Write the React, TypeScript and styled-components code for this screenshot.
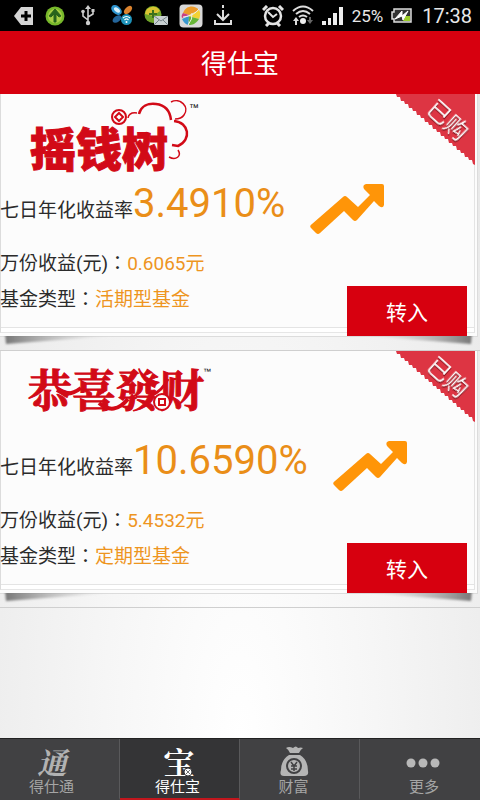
import React from "react";
import styled, { createGlobalStyle } from "styled-components";

const GlobalStyle = createGlobalStyle`
  * { box-sizing: border-box; }
  body {
    margin: 0;
    background: #ececec;
    font-family: Roboto, "Noto Sans CJK SC", sans-serif;
    color: #2b2b2b;
  }
`;

const Screen = styled.div`
  display: flex;
  flex-direction: column;
  min-height: 100vh;
`;

const StatusBar = styled.div`
  display: flex;
  align-items: center;
  justify-content: space-between;
  height: 31px;
  padding: 0 8px 0 14px;
  background: #000;
  color: #e8e8e8;
`;

const StatusGroup = styled.div<{ $gap: number }>`
  display: flex;
  align-items: center;
  gap: ${(p) => p.$gap}px;
`;

const Percent = styled.span`
  font-size: 17px;
  line-height: 20px;
`;

const Clock = styled.time`
  padding-left: 2px;
  font-size: 20px;
  line-height: 24px;
`;

const Header = styled.header`
  display: flex;
  align-items: center;
  justify-content: center;
  height: 63px;
  background: #d7000f;
`;

const Title = styled.h1`
  margin: 0;
  padding-top: 2px;
  color: #fff;
  font-size: 26px;
  font-weight: 400;
  line-height: 36px;
`;

const Main = styled.main`
  flex: 1;
  background: radial-gradient(ellipse at 50% 100%, #fff 0%, #f6f6f6 40%, #e7e7e7 100%);
`;

const Item = styled.section`
  padding: 0 2px 13px 0;
  border-bottom: 1px solid #cfcfcf;
`;

const Card = styled.article`
  position: relative;
  height: 243px;
  border: 1px solid #dcdcdc;
  border-width: 0 1px 1px 0;
  background: #fcfcfc;
`;

const Sheets = styled.div`
  position: absolute;
  inset: 0 2px 3px 0;
  border-right: 1px solid #e4e4e4;
  border-left: 1px solid #dcdcdc;
  border-bottom: 1px solid #e6e6e6;
  box-shadow: inset 0 -4px #fff, inset 0 -5px #e4e4e4;
`;

const Curl = styled.svg<{ $side: "left" | "right" }>`
  position: absolute;
  top: 100%;
  ${(p) => p.$side}: 3px;
  width: 110px;
  height: 10px;
`;

const Ribbon = styled.svg`
  position: absolute;
  top: 0;
  right: 2px;
  width: 82px;
  height: 72px;
  overflow: visible;
`;

const Body = styled.div`
  position: relative;
  display: flex;
  flex-direction: column;
  height: 100%;
`;

const Logo = styled.svg`
  width: 220px;
  height: 84px;
  flex: none;
  overflow: visible;
`;

const RateRow = styled.div`
  display: flex;
  align-items: baseline;
  height: 68px;
  white-space: nowrap;
`;

const Label = styled.span`
  font-size: 19px;
  line-height: 36px;
`;

const Rate = styled.strong`
  color: #ea8e18;
  font-size: 40px;
  font-weight: 400;
  line-height: 52px;
`;

const Arrow = styled.svg`
  align-self: flex-start;
  width: 76px;
  height: 52px;
  margin: 6px 0 0 24px;
`;

const Lower = styled.div`
  display: flex;
  flex: 1;
  justify-content: space-between;
`;

const Details = styled.dl`
  margin: 0;
`;

const Detail = styled.div`
  display: flex;
  font-size: 19px;
  line-height: 36px;
`;

const Term = styled.dt`
  font-family: Roboto, "Noto Sans CJK TC", sans-serif;
`;

const Value = styled.dd`
  margin: 0;
  color: #ee951f;
`;

const Transfer = styled.button`
  align-self: flex-end;
  width: 120px;
  height: 50px;
  margin-right: 10px;
  padding: 0;
  border: 0;
  background: #d7000f;
  color: #fff;
  font: 400 21px "Noto Sans CJK SC", sans-serif;
`;

const TabBar = styled.nav`
  display: grid;
  grid-template-columns: repeat(4, 1fr);
  height: 62px;
  border-top: 1px solid #222;
  background: #414143;
`;

const Tab = styled.a<{ $active?: boolean }>`
  display: flex;
  flex-direction: column;
  align-items: center;
  padding: 6px 0 0 8px;
  border-right: 1px solid #59595b;
  border-bottom: 2px solid ${(p) => (p.$active ? "#c2161d" : "transparent")};
  background: ${(p) => (p.$active ? "#343436" : "transparent")};
  color: ${(p) => (p.$active ? "#fff" : "#a5a5a5")};
  font-size: 15px;
  line-height: 18px;
  text-decoration: none;
  &:nth-child(1) { padding: 6px 16px 0 0; }
  &:nth-child(2) { padding: 6px 4px 0 0; }
  &:nth-child(3) { padding: 6px 12px 0 0; }
  &:last-child { border-right: 0; }
`;

const TabIcon = styled.svg`
  width: 40px;
  height: 33px;
  flex: none;
  overflow: visible;
`;

const RED = "#d20a17";
const SERIF = "Noto Serif CJK SC, Noto Sans CJK SC, serif";

const StatusIcons = () => (
  <StatusGroup $gap={11}>
    <svg width="20" height="20" viewBox="0 0 20 20" aria-hidden="true">
      <path d="M0 10 7 1h12v18H7z" fill="#d5d5d5" />
      <path d="M12 5v10M7 10h10" stroke="#000" strokeWidth="3" />
    </svg>
    <svg width="20" height="20" viewBox="0 0 20 20" aria-hidden="true">
      <circle cx="10" cy="10" r="9.500" fill="#77b82b" />
      <circle cx="10" cy="10" r="7" fill="#a7cd45" />
      <path d="m10 3 6 7-2 1-3-3v8H9V8l-3 3-2-1z" fill="#27631b" stroke="#27631b" />
    </svg>
    <svg width="24" height="21" viewBox="0 0 24 21" fill="none" stroke="#ccc" strokeWidth="1.6" aria-hidden="true">
      <path d="M12 3v15M12 15l-5-4V7M12 12l5-3V6" />
      <path d="m12 0 3 4H9z" fill="#ccc" stroke="none" />
      <circle cx="12" cy="18" r="2.200" fill="#ccc" stroke="none" />
      <circle cx="7" cy="6.500" r="1.800" fill="#ccc" stroke="none" />
      <path d="M15.500 4h3v3h-3z" fill="#ccc" stroke="none" />
    </svg>
    <svg width="22" height="21" viewBox="0 0 22 21" aria-hidden="true">
      <ellipse cx="5.500" cy="5" rx="6" ry="4" transform="rotate(40 5.500 5)" fill="#2d94cf" />
      <ellipse cx="6" cy="5" rx="3.500" ry="2" transform="rotate(40 6 5)" fill="#d7edf8" />
      <ellipse cx="17" cy="5" rx="5" ry="3" transform="rotate(-45 17 5)" fill="#d9822e" />
      <ellipse cx="6" cy="14" rx="5" ry="3" transform="rotate(-35 6 14)" fill="#24659a" />
      <circle cx="15.500" cy="14.500" r="5.500" fill="#1d92b9" />
      <path d="M12 13q3.500-3 7 0M13.500 15q2-2 4 0" fill="none" stroke="#fff" strokeWidth="1.200" />
      <circle cx="15.500" cy="17" r="1" fill="#fff" />
    </svg>
    <svg width="24" height="20" viewBox="0 0 24 20" aria-hidden="true">
      <circle cx="9" cy="8.500" r="8.500" fill="#6fa329" />
      <path d="M1 8a8 8 0 0 1 15-3L9 10z" fill="#d9c332" />
      <path d="M9 4v8M5 8h8" stroke="#3c711d" strokeWidth="2" />
      <path d="M10 10h14v9H10z" fill="#c9d0d2" />
      <path d="m10 10 7 5 7-5M10 19l5-5M24 19l-5-5" fill="none" stroke="#76848a" />
    </svg>
    <svg width="24" height="24" viewBox="0 0 24 24" aria-hidden="true">
      <rect x=".5" y=".5" width="23" height="23" rx="4" fill="#d8d8d8" />
      <path d="M4 9C7 1 16 1 20 6L10 11z" fill="#ed9b29" />
      <path d="M20 6c2 3 1 7 0 9L9 12z" fill="#f3d234" />
      <path d="M20 15c-3 5-7 6-10 6l-1-9z" fill="#66b536" />
      <path d="M9 21c-3-1-5-4-6-6l7-3z" fill="#3897cf" />
      <path d="M3 14c-1-2 0-4 1-5l6 2z" fill="#ca3e82" />
      <path d="M4 13Q15 12 20 5M9 21Q14 15 13 9" stroke="#eee" fill="none" />
    </svg>
    <svg width="18" height="21" viewBox="0 0 18 21" fill="none" stroke="#ddd" strokeWidth="2" aria-hidden="true">
      <path d="M9 0v3M9 5v10M3 9l6 6 6-6M1 15v4h16v-4" />
    </svg>
  </StatusGroup>
);

const SignalIcons = () => (
  <>
    <svg width="22" height="22" viewBox="0 0 22 22" fill="none" stroke="#e4e4e4" aria-hidden="true">
      <circle cx="11" cy="11" r="8" strokeWidth="2.500" />
      <path d="m6 7 5 5 4-3" strokeWidth="2" />
      <path d="m1 5 4-4M17 1l4 4M4 21l3-3M18 21l-3-3" strokeWidth="3" />
    </svg>
    <svg width="22" height="21" viewBox="0 0 22 21" fill="none" stroke="#ddd" strokeWidth="2" aria-hidden="true">
      <path d="M1 6Q11-3 21 6M4 9q7-6 14 0M7 12q4-3 8 0" />
      <circle cx="11" cy="16" r="3" fill="#eee" stroke="none" />
      <path d="m4 12 3 4H5v4H3v-4H1z" fill="#ddd" stroke="none" />
      <path d="m18 19-3-4h2v-3h2v3h2z" fill="#666" stroke="none" />
    </svg>
    <svg width="22" height="19" viewBox="0 0 22 19" fill="#eee" aria-hidden="true">
      <path d="M0 15h4v4H0zM6 12h3v7H6zM11 7h4v12h-4zM17 1h4v18h-4z" />
    </svg>
  </>
);

const Battery = () => (
  <svg width="21" height="15" viewBox="0 0 21 15" aria-hidden="true">
    <path d="M3 1h17v13H3v-3H1V4h2z" fill="#333" stroke="#ddd" strokeWidth="1.500" />
    <path d="M14 8h5v5h-7z" fill="#9acb29" />
    <path d="m4 11 7-8v5l6-5-5 9-1-4z" fill="#fff" stroke="#fff" />
  </svg>
);

const TreeLogo = () => (
  <Logo viewBox="0 0 220 84" role="img" aria-label="摇钱树">
    <g fill="none" stroke={RED}>
      <path d="M128 24q1-6 9-5" strokeWidth="1.500" />
      <path d="M139 20c2-8 9-11 17-10 9 1 14 7 15 16" strokeWidth="2.500" />
      <path d="M171 8c9-5 19 5 13 13-2 3-5 4-9 4" strokeWidth="1.500" />
      <path d="M174 27c15 1 18 19 4 25l-6-1" strokeWidth="2.500" />
      <path d="M178 56c4 6-2 11-9 7" strokeWidth="1.500" />
      <circle cx="119" cy="23" r="7" strokeWidth="2" />
      <path d="m119 19 4 4-4 4-4-4z" strokeWidth="2" />
    </g>
    <text x="30" y="72" fill={RED} stroke={RED} strokeWidth="1" fontFamily="Noto Sans CJK SC, sans-serif" fontSize="46" fontWeight="900">摇钱树</text>
    <text x="189" y="17" fontFamily="Liberation Sans, sans-serif" fontSize="10">™</text>
  </Logo>
);

const FortuneLogo = () => (
  <Logo viewBox="0 0 220 84" role="img" aria-label="恭喜發财">
    <text x="28" y="56" fill={RED} stroke={RED} strokeWidth="1" fontFamily={SERIF} fontSize="44" fontWeight="700">恭喜發财</text>
    <g fill="none" stroke={RED}>
      <path d="M57 39q11 8 24-2M99 52q15 13 29-4" strokeWidth="4" />
      <path d="M151 45q12-6 17-17" strokeWidth="3" />
      <circle cx="162" cy="51" r="8" fill="#fcfcfc" strokeWidth="2" />
      <path d="M159 48h6v6h-6z" strokeWidth="2" />
    </g>
    <text x="203" y="23" fontFamily="Liberation Sans, sans-serif" fontSize="8">™</text>
  </Logo>
);

const teeth = Array.from({ length: 20 }, (_, i) => `l3 0l1 ${i % 2 ? 4 : 3}`).join("");

const Purchased = () => (
  <Ribbon viewBox="0 0 82 72" role="img" aria-label="已购">
    <path d={`M0 0${teeth}L82 71V0z`} fill="#dd3543" />
    <g transform="rotate(42 54 24)" fontFamily="Noto Sans CJK SC, sans-serif" fontSize="23" textAnchor="middle">
      <text x="56" y="33" fill="#fff" filter="drop-shadow(1px 1px 0 #8b1822)">已购</text>
    </g>
  </Ribbon>
);

const Shadow = ({ side }: { side: "left" | "right" }) => (
  <Curl $side={side} viewBox="0 0 110 10" aria-hidden="true">
    <defs>
      <linearGradient id={`fade-${side}`} x1={side === "left" ? "0" : "1"} x2={side === "left" ? "1" : "0"}>
        <stop stopColor="#777" />
        <stop offset="1" stopColor="#ccc" stopOpacity="0" />
      </linearGradient>
      <filter id={`soft-${side}`}><feGaussianBlur stdDeviation="1" /></filter>
    </defs>
    <path d={side === "left" ? "M2-3h108V0L3 8z" : "M108-3H0V0l107 8z"} fill={`url(#fade-${side})`} filter={`url(#soft-${side})`} />
  </Curl>
);

interface Fund {
  logo: React.ReactNode;
  rate: string;
  income: string;
  kind: string;
}

const funds: Fund[] = [
  { logo: <TreeLogo />, rate: "3.4910%", income: "0.6065元", kind: "活期型基金" },
  { logo: <FortuneLogo />, rate: "10.6590%", income: "5.4532元", kind: "定期型基金" },
];

const FundCard = ({ fund }: { fund: Fund }) => (
  <Item>
    <Card>
      <Sheets />
      <Shadow side="left" />
      <Shadow side="right" />
      <Body>
        {fund.logo}
        <RateRow>
          <Label>七日年化收益率</Label>
          <Rate>{fund.rate}</Rate>
          <Arrow viewBox="0 0 76 52" aria-hidden="true">
            <path d="M3 40 34 13q2-2 4 0l11 10 12-12-6-6q-2-4 2-5h16q2 0 2 2v19q-1 4-5 1l-5-5-17 19q-2 2-4 0L35 27 11 49q-2 2-4 0l-5-5q-2-2 1-4z" fill="#ff9508" />
          </Arrow>
        </RateRow>
        <Lower>
          <Details>
            <Detail><Term>万份收益(元)：</Term><Value>{fund.income}</Value></Detail>
            <Detail><Term>基金类型：</Term><Value>{fund.kind}</Value></Detail>
          </Details>
          <Transfer type="button">转入</Transfer>
        </Lower>
      </Body>
      <Purchased />
    </Card>
  </Item>
);

const App = () => (
  <>
    <GlobalStyle />
    <Screen>
      <StatusBar>
        <StatusIcons />
        <StatusGroup $gap={8}>
          <SignalIcons />
          <Percent>25%</Percent>
          <Battery />
          <Clock>17:38</Clock>
        </StatusGroup>
      </StatusBar>
      <Header><Title>得仕宝</Title></Header>
      <Main>
        {funds.map((fund) => <FundCard key={fund.kind} fund={fund} />)}
      </Main>
      <TabBar>
        <Tab href="#tong">
          <TabIcon viewBox="0 0 40 33" aria-hidden="true">
            <text x="20" y="29" textAnchor="middle" fill="#b2b2b2" fontFamily={SERIF} fontSize="30" fontWeight="700" fontStyle="italic">通</text>
          </TabIcon>
          得仕通
        </Tab>
        <Tab href="#bao" $active aria-current="page">
          <TabIcon viewBox="0 0 40 33" aria-hidden="true">
            <text x="21" y="29" textAnchor="middle" fill="#fff" fontFamily={SERIF} fontSize="31" fontWeight="700">宝</text>
            <circle cx="30" cy="27" r="4" fill="#fff" stroke="#343436" />
            <path d="m28 25 4 4M32 25l-4 4" stroke="#777" />
          </TabIcon>
          得仕宝
        </Tab>
        <Tab href="#wealth">
          <TabIcon viewBox="0 0 40 33" aria-hidden="true">
            <path d="M16 8q-1-3-4-5 3-2 7 0 3-3 5 0 3-1 5 0-3 2-4 5zM15 10h11q8 5 8 16 1 5-4 5H10q-5 0-3-6 0-10 8-15z" fill="#b5b5b5" />
            <circle cx="20" cy="21" r="7" fill="none" stroke="#414143" strokeWidth="2" />
            <path d="m17 17 3 4 3-4M20 21v5M17 21h6M17 24h6" fill="none" stroke="#414143" strokeWidth="1.500" />
          </TabIcon>
          财富
        </Tab>
        <Tab href="#more">
          <TabIcon viewBox="0 0 40 33" aria-hidden="true">
            <g fill="#b8b8b8"><circle cx="7" cy="18" r="4.500" /><circle cx="19" cy="18" r="4.500" /><circle cx="31" cy="18" r="4.500" /></g>
          </TabIcon>
          更多
        </Tab>
      </TabBar>
    </Screen>
  </>
);

export default App;
